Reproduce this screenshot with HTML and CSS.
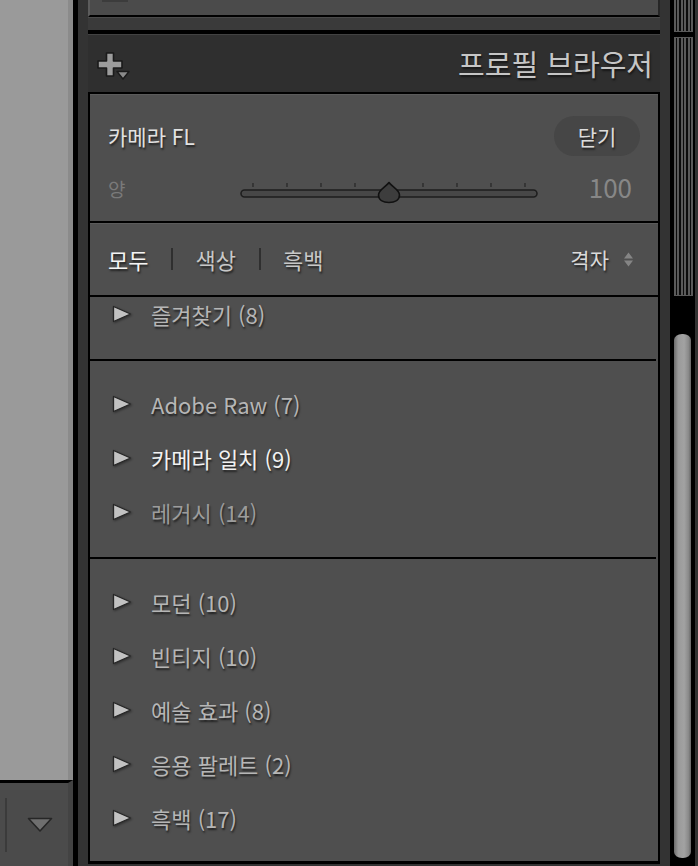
FILE: index.html
```html
<!DOCTYPE html>
<html lang="ko">
<head>
<meta charset="utf-8">
<title>프로필 브라우저</title>
<link rel="stylesheet" href="styles.css">
</head>
<body>
<div class="app">
  <div class="left">
    <div class="left-view"></div>
    <div class="left-bar">
      <span class="left-rule"></span>
      <svg class="left-tri" width="26" height="16" viewBox="0 0 26 16"><polygon points="1.5,1.5 24.5,1.5 13,14" fill="#6f6f6f" stroke="#262626" stroke-width="1.6" stroke-linejoin="round"/></svg>
    </div>
  </div>
  <div class="vline"></div>
  <div class="main">
    <div class="center">
      <div class="stub"><span class="stub-mark"></span></div>
      <div class="strip"></div>
      <div class="header">
        <svg class="add-icon" width="36" height="32" viewBox="0 0 36 32">
          <path d="M10.5 3 H17.5 V11 H26 V18 H17.5 V26 H10.5 V18 H2 V11 H10.5 Z" fill="#9c9c9c" stroke="#1a1a1a" stroke-width="1.6" stroke-linejoin="round"/>
          <polygon points="21,21.5 33,21.5 27,29" fill="#8a8a8a" stroke="#1a1a1a" stroke-width="1.4" stroke-linejoin="round"/>
        </svg>
        <div class="title">프로필 브라우저</div>
      </div>
      <div class="panel">
        <div class="sec-profile">
          <div class="prof-row">
            <span class="prof-name">카메라 FL</span>
            <span class="close-btn">닫기</span>
          </div>
          <div class="amount-row">
            <span class="amount-label">양</span>
            <svg class="slider" width="298" height="28" viewBox="0 0 298 28">
              <g stroke="#262626" stroke-width="1.2">
                <line x1="13" y1="7" x2="13" y2="11"/>
                <line x1="47" y1="7" x2="47" y2="11"/>
                <line x1="81" y1="7" x2="81" y2="11"/>
                <line x1="115" y1="7" x2="115" y2="11"/>
                <line x1="183" y1="7" x2="183" y2="11"/>
                <line x1="217" y1="7" x2="217" y2="11"/>
                <line x1="251" y1="7" x2="251" y2="11"/>
                <line x1="285" y1="7" x2="285" y2="11"/>
              </g>
              <rect x="1" y="14" width="296" height="7" rx="3.5" fill="#474747" stroke="#1e1e1e" stroke-width="1.6"/>
              <path d="M149 6.5 C151 10 159.5 14 159.5 19 C159.5 24 155 26.5 149 26.5 C143 26.5 138.5 24 138.5 19 C138.5 14 147 10 149 6.5 Z" fill="#3d3d3d" stroke="#111" stroke-width="1.6" stroke-linejoin="round"/>
            </svg>
            <span class="amount-val">100</span>
          </div>
        </div>
        <div class="sec-filter">
          <div class="filters">
            <span class="filter active">모두</span>
            <span class="fsep"></span>
            <span class="filter">색상</span>
            <span class="fsep"></span>
            <span class="filter">흑백</span>
          </div>
          <div class="view-sel">
            <span class="view-name">격자</span>
            <svg width="11" height="17" viewBox="0 0 11 17"><polygon points="1,7.5 5.5,1.5 10,7.5" fill="#858585"/><polygon points="1,9.5 10,9.5 5.5,15.5" fill="#858585"/></svg>
          </div>
        </div>
        <div class="list">
          <div class="list-inner">
            <div class="group">
              <div class="row"><svg class="tri" width="20" height="18" viewBox="0 0 20 18"><polygon points="1.5,1.5 18.5,9 1.5,16.5" fill="#c2c2c2" stroke="#262626" stroke-width="1.3" stroke-linejoin="round"/></svg><span class="label">즐겨찾기 (8)</span></div>
            </div>
            <div class="group">
              <div class="row"><svg class="tri" width="20" height="18" viewBox="0 0 20 18"><polygon points="1.5,1.5 18.5,9 1.5,16.5" fill="#c2c2c2" stroke="#262626" stroke-width="1.3" stroke-linejoin="round"/></svg><span class="label">Adobe Raw (7)</span></div>
              <div class="row"><svg class="tri" width="20" height="18" viewBox="0 0 20 18"><polygon points="1.5,1.5 18.5,9 1.5,16.5" fill="#c2c2c2" stroke="#262626" stroke-width="1.3" stroke-linejoin="round"/></svg><span class="label bright">카메라 일치 (9)</span></div>
              <div class="row"><svg class="tri" width="20" height="18" viewBox="0 0 20 18"><polygon points="1.5,1.5 18.5,9 1.5,16.5" fill="#c2c2c2" stroke="#262626" stroke-width="1.3" stroke-linejoin="round"/></svg><span class="label dim">레거시 (14)</span></div>
            </div>
            <div class="group">
              <div class="row"><svg class="tri" width="20" height="18" viewBox="0 0 20 18"><polygon points="1.5,1.5 18.5,9 1.5,16.5" fill="#c2c2c2" stroke="#262626" stroke-width="1.3" stroke-linejoin="round"/></svg><span class="label">모던 (10)</span></div>
              <div class="row"><svg class="tri" width="20" height="18" viewBox="0 0 20 18"><polygon points="1.5,1.5 18.5,9 1.5,16.5" fill="#c2c2c2" stroke="#262626" stroke-width="1.3" stroke-linejoin="round"/></svg><span class="label">빈티지 (10)</span></div>
              <div class="row"><svg class="tri" width="20" height="18" viewBox="0 0 20 18"><polygon points="1.5,1.5 18.5,9 1.5,16.5" fill="#c2c2c2" stroke="#262626" stroke-width="1.3" stroke-linejoin="round"/></svg><span class="label">예술 효과 (8)</span></div>
              <div class="row"><svg class="tri" width="20" height="18" viewBox="0 0 20 18"><polygon points="1.5,1.5 18.5,9 1.5,16.5" fill="#c2c2c2" stroke="#262626" stroke-width="1.3" stroke-linejoin="round"/></svg><span class="label">응용 팔레트 (2)</span></div>
              <div class="row"><svg class="tri" width="20" height="18" viewBox="0 0 20 18"><polygon points="1.5,1.5 18.5,9 1.5,16.5" fill="#c2c2c2" stroke="#262626" stroke-width="1.3" stroke-linejoin="round"/></svg><span class="label">흑백 (17)</span></div>
            </div>
          </div>
        </div>
      </div>
    </div>
    <div class="scroll">
      <div class="track">
        <div class="grip grip-a"></div>
        <div class="grip grip-b"></div>
        <div class="thumb"></div>
      </div>
    </div>
  </div>
</div>
</body>
</html>
```

FILE: styles.css
```css
* { box-sizing: border-box; }

html, body {
  margin: 0;
  padding: 0;
  width: 698px;
  height: 866px;
  overflow: hidden;
  background: #333;
  font-family: "Noto Sans CJK KR", "Noto Sans", sans-serif;
}

.app {
  display: flex;
  width: 698px;
  height: 866px;
}

/* left column */
.left {
  width: 73px;
  display: flex;
  flex-direction: column;
}
.left-view {
  flex: 1;
  background: #9a9a9a;
  border-right: 5px solid #8b8b8b;
}
.left-bar {
  height: 86px;
  border-top: 3px solid #000;
  border-right: 5px solid #434343;
  background: #4b4b4b;
  display: flex;
  align-items: center;
}
.left-rule {
  width: 2px;
  height: 54px;
  margin-left: 5px;
  background: #3b3b3b;
}
.left-tri {
  margin-left: 20px;
  display: block;
}
.vline {
  width: 5px;
  background: #000;
}

/* main */
.main {
  width: 620px;
  display: flex;
  background: #333;
}
.center {
  width: 572px;
  margin-left: 10px;
  display: flex;
  flex-direction: column;
}
.stub {
  height: 17px;
  background: #4b4b4b;
  border-left: 2px solid #5c5c5c;
  border-right: 2px solid #262626;
  border-bottom: 2px solid #000;
  display: flex;
}
.stub-mark {
  width: 26px;
  height: 2px;
  margin-left: 12px;
  background: #3c3c3c;
}
.strip {
  height: 17px;
  background: #3a3a3a;
  border-top: 1px solid #4a4a4a;
  border-bottom: 4px solid #000;
}
.header {
  height: 58px;
  background: #2f2f2f;
  border-top: 1px solid #424242;
  display: flex;
  align-items: center;
  justify-content: space-between;
  padding: 0 7px 0 8px;
}
.add-icon {
  display: block;
  margin-top: 4px;
}
.title {
  font-size: 29px;
  color: #c6c6c6;
  line-height: 1;
  text-shadow: 1px 2px 2px rgba(0,0,0,0.55);
}

.panel {
  flex: 1;
  margin-bottom: 2px;
  border: 2px solid #000;
  border-bottom-width: 3px;
  background: #4f4f4f;
  display: flex;
  flex-direction: column;
  overflow: hidden;
}
.sec-profile {
  height: 127px;
  padding: 22px 18px 0 18px;
  box-shadow: inset 0 1px 0 #5b5b5b;
}
.prof-row {
  height: 40px;
  display: flex;
  align-items: center;
  justify-content: space-between;
}
.prof-name {
  font-size: 21px;
  color: #e2e2e2;
  text-shadow: 1px 2px 2px rgba(0,0,0,0.6);
}
.close-btn {
  width: 86px;
  height: 40px;
  border-radius: 20px;
  background: #464646;
  display: flex;
  align-items: center;
  justify-content: center;
  font-size: 21px;
  color: #dcdcdc;
  text-shadow: 1px 2px 2px rgba(0,0,0,0.6);
}
.amount-row {
  margin-top: 18px;
  height: 32px;
  display: grid;
  grid-template-columns: 132px 298px 1fr;
  align-items: center;
}
.amount-label {
  font-size: 19px;
  color: #7a7a7a;
  margin-top: -4px;
}
.slider { display: block; }
.amount-val {
  justify-self: end;
  padding-right: 8px;
  font-size: 26px;
  color: #878787;
  margin-top: -6px;
  line-height: 1;
}

.sec-filter {
  height: 76px;
  border-top: 2px solid #000;
  border-bottom: 2px solid #000;
  box-shadow: inset 0 1px 0 #5b5b5b;
  display: flex;
  align-items: center;
  justify-content: space-between;
  padding: 0 24px 0 18px;
}
.filters {
  display: flex;
  align-items: center;
}
.filter {
  font-size: 22px;
  color: #c8c8c8;
  text-shadow: 1px 2px 2px rgba(0,0,0,0.6);
}
.filter.active { color: #f4f4f4; }
.fsep {
  width: 2px;
  height: 22px;
  background: #2f2f2f;
  margin: 0 22px 0 23px;
}
.view-sel {
  display: flex;
  align-items: center;
  gap: 14px;
}
.view-name {
  font-size: 21px;
  color: #dadada;
  text-shadow: 1px 2px 2px rgba(0,0,0,0.6);
}
.view-sel svg { display: block; }

.list {
  flex: 1;
  overflow: hidden;
}
.list-inner {
  margin-top: -28px;
}
.group {
  padding: 16px 0 18px 0;
  border-bottom: 2px solid #000;
  margin-right: 2px;
}
.group:first-child { padding: 18px 0 18px 0; }
.row {
  height: 54px;
  display: flex;
  align-items: center;
  padding-left: 22px;
}
.tri {
  display: block;
  margin-right: 19px;
  filter: drop-shadow(1px 1px 1px rgba(0,0,0,0.4));
}
.label {
  font-size: 22px;
  color: #b6b6b6;
  text-shadow: 1px 2px 2px rgba(0,0,0,0.6);
}
.label.bright { color: #f2f2f2; }
.label.dim { color: #9c9c9c; }

/* scrollbar */
.scroll {
  width: 38px;
  padding: 0 3px 0 10px;
}
.track {
  height: 866px;
  background: #000;
  padding: 0 2px 0 4px;
  display: flex;
  flex-direction: column;
}
.grip {
  background: repeating-linear-gradient(90deg, #5a5a5a 0 1.7px, #0c0c0c 1.7px 3.5px);
}
.grip-a {
  height: 32px;
  border-bottom: 1px solid #5a5a5a;
}
.grip-b {
  height: 259px;
  margin-top: 5px;
  border-top: 1px solid #5a5a5a;
  border-bottom: 1px solid #5a5a5a;
}
.thumb {
  width: 17px;
  height: 524px;
  margin-top: 38px;
  border-radius: 8px / 6px;
  background: linear-gradient(90deg, #6c6c6c 0%, #9a9a9a 25%, #a2a2a2 60%, #8a8a8a 85%, #666 100%);
}
```
